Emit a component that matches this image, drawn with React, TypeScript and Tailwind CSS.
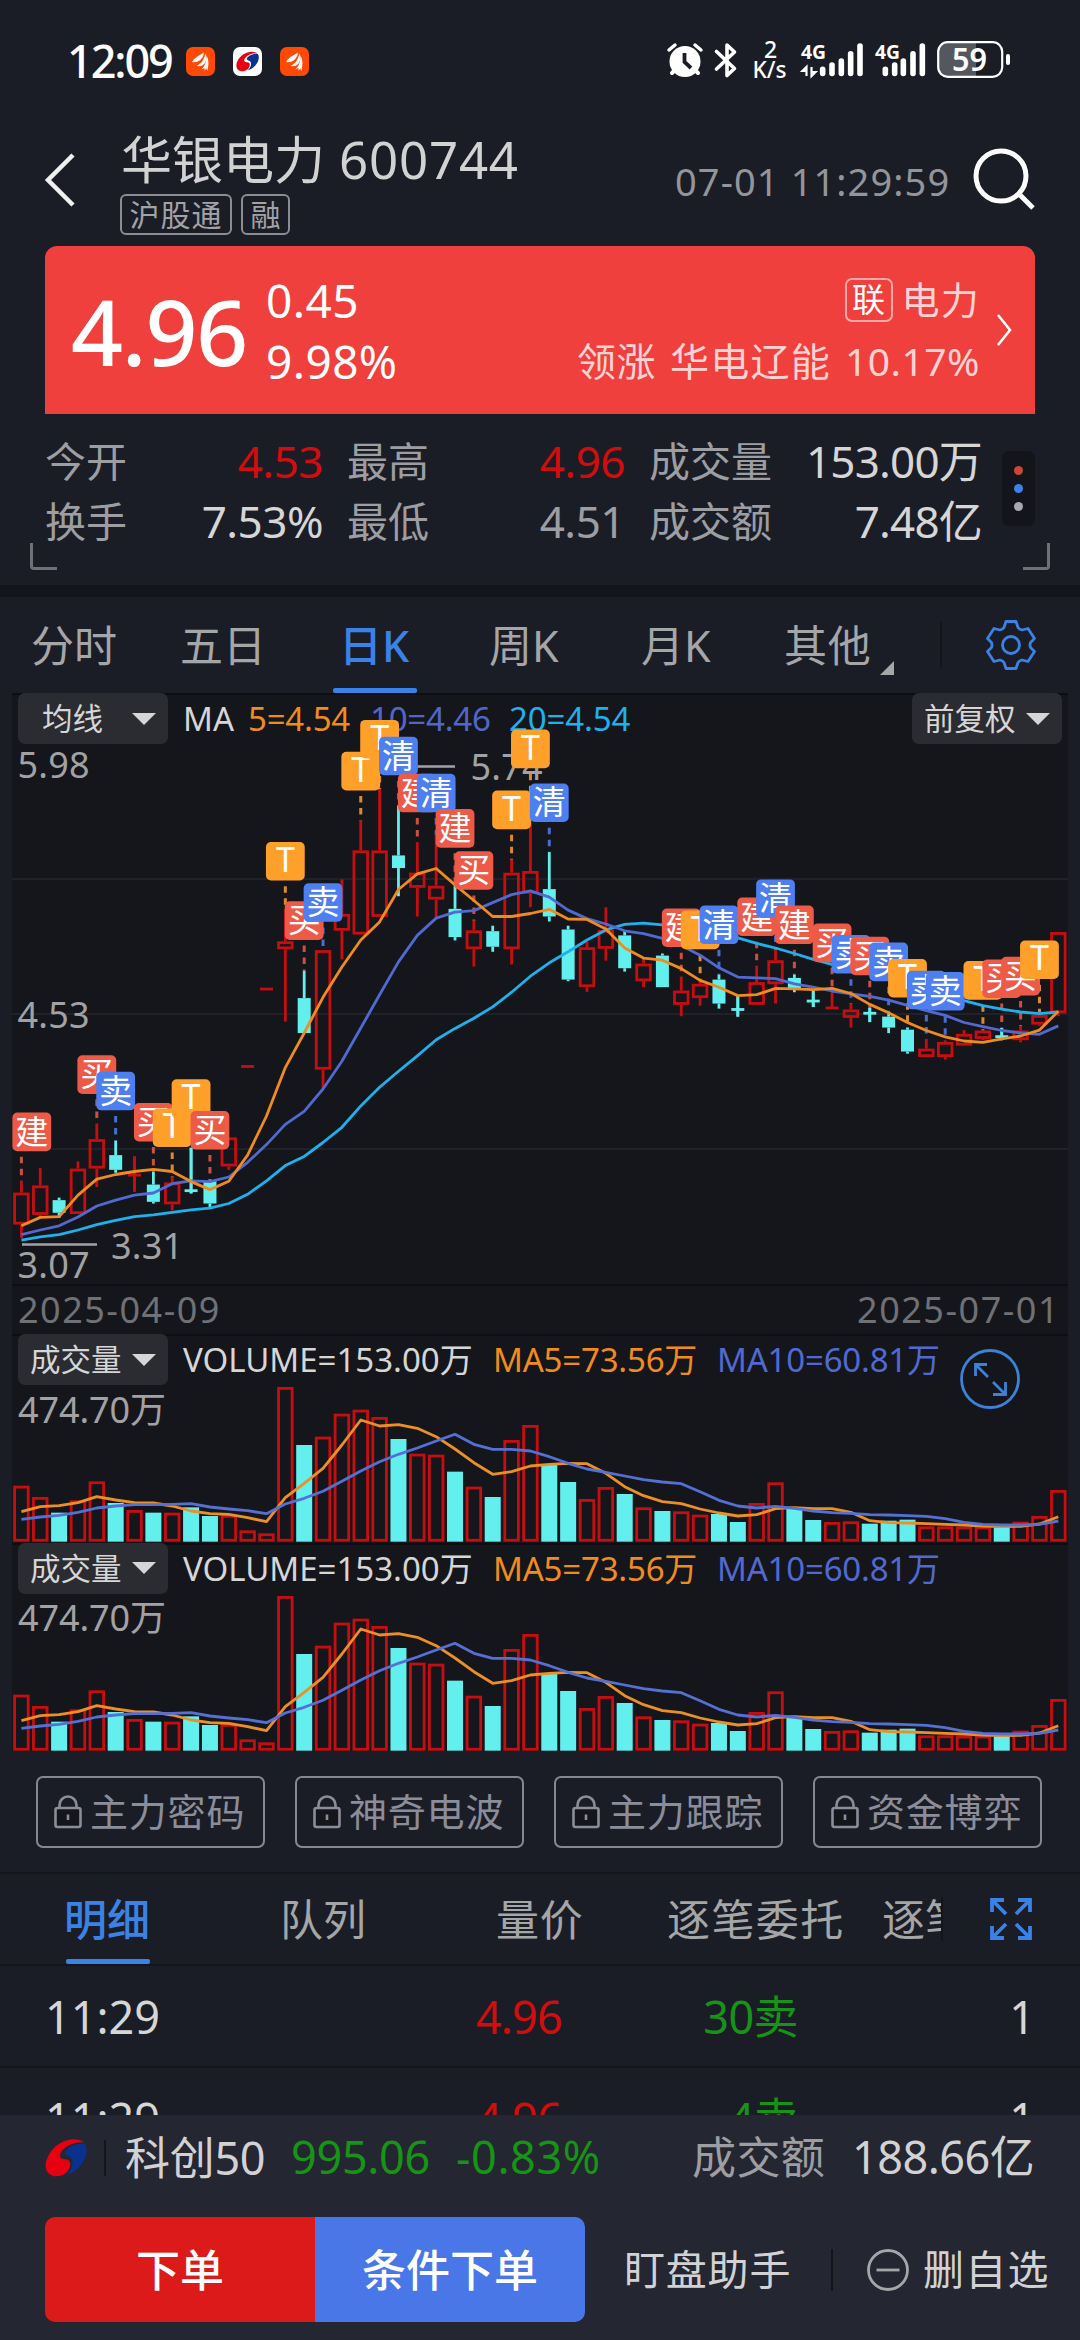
import React from "react";

type Tone = "r" | "c";
type Candle = [number, number, number, number, Tone];

const RED = "#c60e11";
const CYAN = "#63efee";
const STEP = 18.853;
const cx = (i: number) => 21.4 + STEP * i;
const py = (v: number) => v / 2.3758;
const vy = (v: number) => v / 3;

/* high, body top, body bottom, low */
const CANDLES: Candle[] = [
  [1168, 1194, 1270, 1302, "r"], [1136, 1177, 1247, 1252, "r"], [1206, 1212, 1242, 1254, "c"], [1120, 1137, 1245, 1245, "r"],
  [1030, 1067, 1137, 1181, "r"], [1071, 1105, 1140, 1147, "c"], [1108, 1150, 1155, 1192, "r"], [1145, 1175, 1216, 1220, "c"],
  [1158, 1170, 1222, 1236, "r"], [1088, 1187, 1192, 1196, "c"], [1163, 1167, 1220, 1230, "c"], [1063, 1063, 1132, 1140, "r"],
  [892, 892, 897, 897, "r"], [708, 708, 713, 713, "r"], [520, 597, 616, 788, "r"], [667, 732, 815, 815, "c"],
  [618, 618, 902, 946, "r"], [450, 532, 572, 640, "r"], [310, 381, 581, 581, "r"], [235, 381, 539, 539, "r"],
  [275, 393, 423, 490, "c"], [362, 434, 470, 538, "r"], [345, 465, 498, 540, "r"], [465, 520, 587, 595, "c"],
  [548, 571, 616, 657, "r"], [560, 573, 610, 622, "c"], [403, 434, 616, 652, "r"], [310, 430, 484, 516, "r"],
  [385, 473, 538, 550, "c"], [560, 569, 688, 692, "c"], [598, 611, 706, 717, "r"], [516, 570, 615, 643, "r"],
  [572, 583, 661, 669, "c"], [637, 650, 692, 706, "r"], [626, 631, 706, 706, "c"], [683, 714, 748, 775, "r"],
  [690, 698, 732, 750, "r"], [676, 688, 745, 757, "c"], [725, 757, 761, 776, "c"], [655, 694, 748, 748, "r"],
  [618, 642, 699, 745, "r"], [676, 684, 710, 718, "c"], [715, 737, 741, 753, "c"], [705, 753, 758, 758, "r"],
  [746, 759, 779, 802, "r"], [755, 766, 770, 789, "c"], [770, 776, 802, 815, "c"], [803, 807, 859, 864, "c"],
  [829, 852, 872, 872, "r"], [833, 836, 872, 878, "r"], [808, 817, 845, 845, "r"], [809, 809, 829, 832, "r"],
  [803, 821, 826, 832, "c"], [798, 809, 832, 837, "r"], [766, 772, 795, 798, "r"], [575, 575, 768, 775, "r"],
];

const MA5 = [1273, 1253, 1251, 1200, 1162, 1151, 1144, 1139, 1144, 1168, 1187, 1167, 1105, 1012, 897, 815, 730, 658, 594, 551, 474, 437, 424, 463, 500, 538, 538, 531, 521, 544, 545, 568, 613, 637, 642, 662, 690, 706, 726, 724, 709, 710, 712, 709, 721, 747, 767, 790, 809, 824, 834, 837, 829, 822, 808, 763];
const MA10 = [1294, 1283, 1273, 1252, 1226, 1212, 1200, 1195, 1173, 1166, 1168, 1157, 1122, 1080, 1032, 1001, 948, 882, 803, 724, 646, 583, 542, 528, 524, 505, 486, 477, 492, 523, 543, 556, 572, 579, 590, 607, 630, 660, 682, 684, 686, 698, 706, 715, 722, 728, 737, 749, 762, 773, 790, 800, 809, 815, 818, 798];
const MA20 = [1307, 1299, 1294, 1283, 1270, 1260, 1251, 1247, 1241, 1235, 1231, 1220, 1198, 1166, 1130, 1108, 1075, 1039, 988, 944, 906, 869, 831, 804, 780, 753, 718, 680, 648, 622, 594, 570, 557, 554, 558, 563, 570, 578, 589, 602, 613, 626, 640, 652, 660, 670, 682, 695, 708, 722, 738, 750, 758, 765, 769, 765];

type Mark = "建" | "买" | "卖" | "清" | "T";
const MARKS: [number, Mark, number][] = [
  [0, "建", 1004], [4, "买", 868], [5, "卖", 907], [7, "买", 981], [8, "T", 994], [9, "T", 925], [10, "买", 1000],
  [14, "T", 361], [15, "买", 502], [16, "卖", 459], [18, "T", 147], [19, "T", 71], [20, "清", 111], [21, "建", 199],
  [22, "清", 199], [23, "建", 283], [24, "买", 383], [26, "T", 239], [27, "T", 94], [28, "清", 222], [35, "建", 519],
  [36, "T", 524], [37, "清", 512], [39, "建", 493], [40, "清", 450], [41, "建", 512], [43, "买", 555], [44, "卖", 582],
  [45, "买", 586], [46, "卖", 600], [47, "T", 639], [48, "卖", 667], [49, "卖", 670], [51, "T", 644], [52, "买", 640],
  [53, "买", 634], [54, "T", 595],
];
const markColor = (m: Mark) => (m === "T" ? "#ffa02b" : m === "建" || m === "买" ? "#ee5a48" : "#4d7ff0");

const VOL = [497, 531, 578, 541, 484, 549, 570, 578, 578, 562, 588, 585, 631, 640, 201, 375, 350, 281, 269, 291, 357, 401, 404, 455, 500, 531, 360, 315, 433, 486, 537, 501, 522, 562, 573, 574, 584, 582, 606, 549, 487, 567, 600, 606, 604, 611, 602, 599, 619, 619, 620, 620, 622, 605, 588, 510];
const VMA5 = [575, 560, 557, 548, 530, 540, 548, 549, 558, 573, 581, 583, 593, 605, 533, 490, 445, 375, 300, 318, 314, 325, 350, 387, 428, 463, 455, 438, 433, 430, 431, 460, 500, 527, 545, 551, 567, 579, 588, 584, 566, 563, 566, 566, 577, 602, 608, 609, 611, 613, 615, 618, 620, 619, 612, 590];
const VMA10 = [598, 591, 586, 577, 564, 558, 554, 554, 553, 551, 561, 567, 572, 581, 552, 535, 514, 484, 453, 425, 403, 384, 363, 343, 373, 388, 388, 393, 410, 430, 447, 457, 468, 479, 486, 491, 515, 541, 558, 564, 559, 565, 573, 578, 580, 584, 585, 587, 589, 596, 607, 613, 615, 615, 613, 603];

const line = (vals: number[], y: (v: number) => number) =>
  vals.map((v, i) => `${cx(i).toFixed(1)},${y(v).toFixed(1)}`).join(" ");

function Swirl({ w, h, className = "" }: { w: number; h: number; className?: string }) {
  return (
    <svg width={w} height={h} viewBox="0 0 126 120" preserveAspectRatio="none" className={className}>
      <path d="M118 13C88-8 28 8 6 62c-11 30 2 53 27 53 23 0 38-13 42-30 3-15-4-21-16-21-14 0-19-11-9-24C64 21 92 10 118 13z" fill="#e60012" />
      <path d="M119 17C96 13 66 28 60 43c-3 11 9 9 17 16 13 14 3 34-13 53 38-14 66-50 60-84-1-6-3-10-5-11z" fill="#0b318f" />
    </svg>
  );
}

function FeatherApp() {
  return (
    <svg width="29" height="29" viewBox="0 0 29 29">
      <rect width="29" height="29" rx="7" fill="#ff4a05" />
      <g fill="#fff">
        <path d="M6 15c2-3.500 5-5.500 12-9.500-.5 4-2.500 6.500-4.500 8-2 1.500-5 2-7.500 1.500z" />
        <path d="M10.500 18.800c5-2 7.500-6 9-12.500 1.700 4 1 8-1.200 10.500s-5.300 3-7.800 2z" />
        <path d="M15.500 22.500c4-4.500 5-8.500 5-13.500 2.300 3.500 2.500 8 .8 15l-1.200-3-1.200 2.500-.7-2.500z" />
      </g>
    </svg>
  );
}

function StatusIcons() {
  const tops = [110, 97, 85, 63, 40];
  const bars = (xs: number[]) =>
    xs.map((x, i) => (
      <line key={x} x1={x / 3} x2={x / 3} y1={tops[i] / 3 + 2.7} y2={43.5} stroke="#fff" strokeWidth="5.6" strokeLinecap="round" />
    ));
  return (
    <svg width="380" height="70" viewBox="0 0 380 70" fontFamily='"Noto Sans", sans-serif' fill="#fff">
      <circle cx="34" cy="31.500" r="15.500" />
      <path d="M21 43l4-4M47 43l-4-4" stroke="#fff" strokeWidth="4" strokeLinecap="round" />
      <path d="M18 20l6-5M50 20l-6-5" stroke="#fff" strokeWidth="3.5" strokeLinecap="round" />
      <path d="M33.500 23v9l6.500 6" stroke="#1b1d26" strokeWidth="3.8" fill="none" />
      <path d="M65.500 21.500l18 17-7.500 7V15l7.500 7-18 17" stroke="#fff" strokeWidth="3.6" fill="none" strokeLinejoin="round" strokeLinecap="round" />
      <text x="113" y="27.500" fontSize="23" fontWeight="500">2</text>
      <text x="101.500" y="48" fontSize="23" fontWeight="500" textLength="34" lengthAdjust="spacingAndGlyphs">K/s</text>
      <text x="150" y="28.500" fontSize="20" fontWeight="700" textLength="25" lengthAdjust="spacingAndGlyphs">4G</text>
      <text x="224" y="28.500" fontSize="20" fontWeight="700" textLength="25" lengthAdjust="spacingAndGlyphs">4G</text>
      <path d="M155.500 46V37l-4 4h3M160.500 37v9l4-4h-3" stroke="#fff" strokeWidth="2.2" fill="none" />
      {bars([515, 543, 571, 599, 627])}
      {bars([703, 731, 757, 786, 814])}
      <path d="M297 12.500h28v34h-28a9 9 0 0 1-9-9v-16a9 9 0 0 1 9-9z" fill="#55575f" />
      <rect x="287.200" y="12.200" width="64" height="34.600" rx="9.500" fill="none" stroke="#fff" strokeWidth="2.2" />
      <line x1="357" x2="357" y1="26" y2="33" stroke="#fff" strokeWidth="4" strokeLinecap="round" />
      <text x="301" y="41" fontSize="33" fontWeight="600" textLength="35" lengthAdjust="spacingAndGlyphs">59</text>
    </svg>
  );
}

function StatusBar() {
  return (
    <div className="flex h-[122px] items-center pl-[67px]">
      <span className="mb-[2px] w-[119px] text-[45px] font-medium tracking-[-2.1px] text-white">12:09</span>
      <FeatherApp />
      <div className="mx-[18px] flex h-[29px] w-[29px] items-center justify-center rounded-[7px] bg-white">
        <Swirl w={23} h={21} />
      </div>
      <FeatherApp />
      <div className="ml-[342px] mt-[8px]"><StatusIcons /></div>
    </div>
  );
}

function Header() {
  return (
    <div className="flex h-[124px] pl-[43px]">
      <svg width="34" height="62" viewBox="0 0 34 62" className="mt-[27px]">
        <path d="M30 6L5 31l25 25" fill="none" stroke="#f0f0f0" strokeWidth="4.5" />
      </svg>
      <div className="ml-[43px] w-[555px] pt-[7px]">
        <div className="flex h-[65px] items-start pt-[5px] text-[51px] text-[#d2d2d2]">
          <span className="ml-[1px] w-[218px]">华银电力</span>
          <span className="tracking-[0.8px]">600744</span>
        </div>
        <div className="flex gap-[9px]">
          <span className="flex h-[41px] w-[112px] items-center justify-center rounded-[6px] border-2 border-[#8b8d92] text-[30px] tracking-[1px] text-[#a2a3a6]">沪股通</span>
          <span className="flex h-[41px] w-[49px] items-center justify-center rounded-[6px] border-2 border-[#8b8d92] text-[30px] text-[#a2a3a6]">融</span>
        </div>
      </div>
      <span className="mt-[30px] w-[297px] text-[38px] leading-[58px] tracking-[1.1px] text-[#93959a]">07-01 11:29:59</span>
      <svg width="66" height="66" viewBox="0 0 66 66" className="mt-[25px]">
        <circle cx="29" cy="29" r="25" fill="none" stroke="#fff" strokeWidth="5" />
        <path d="M47 47l14 14" stroke="#fff" strokeWidth="5" />
      </svg>
    </div>
  );
}

function PriceCard() {
  return (
    <div className="mx-[45px] flex h-[168px] rounded-t-[12px] bg-[#ef403d] text-white">
      <span className="ml-[26px] w-[195px] text-[91px] font-medium leading-[170px] tracking-[-1.2px]">4.96</span>
      <div className="flex w-[240px] flex-col pt-[24px] text-[46px] leading-[61px]">
        <span className="tracking-[0.4px]">0.45</span>
        <span className="tracking-[0.4px]">9.98%</span>
      </div>
      <div className="ml-auto flex flex-col items-end pt-[23px] text-[39px] leading-[61px] text-[#fcd3d2]">
        <div className="flex items-center gap-[9px]">
          <span className="flex h-[44px] w-[48px] items-center justify-center rounded-[7px] border-2 border-[#f9a9a7] text-[33px] text-white">联</span>
          <span className="text-[38px] tracking-[1.2px]">电力</span>
        </div>
        <div className="flex">
          <span className="mr-[14px] tracking-[0.5px]">领涨</span>
          <span className="mr-[14px] tracking-[1.2px]">华电辽能</span>
          <span className="tracking-[0.5px]">10.17%</span>
        </div>
      </div>
      <svg width="20" height="36" viewBox="0 0 20 36" className="ml-[14px] mr-[21px] mt-[66px]">
        <path d="M4 3l12 15L4 33" fill="none" stroke="#fff" strokeWidth="2.6" />
      </svg>
    </div>
  );
}

function Stats() {
  const rows = [
    ["今开", "4.53", "text-[#d20d0d]", "最高", "4.96", "text-[#d20d0d]", "成交量", "153.00万"],
    ["换手", "7.53%", "text-[#d6d6d6]", "最低", "4.51", "text-[#9d9ea2]", "成交额", "7.48亿"],
  ];
  return (
    <div className="relative flex h-[171px] pl-[45px] pt-[17px]">
      <div className="w-[937px]">
        {rows.map((r) => (
          <div key={r[0]} className="flex h-[60px] items-center text-[44px] text-[#d6d6d6]">
            <span className="w-[120px] text-[41px] text-[#9d9ea2]">{r[0]}</span>
            <span className={`w-[158px] text-right tracking-[-0.5px] ${r[2]}`}>{r[1]}</span>
            <span className="ml-[24px] w-[120px] text-[41px] text-[#9d9ea2]">{r[3]}</span>
            <span className={`w-[158px] text-right tracking-[-0.5px] ${r[5]}`}>{r[4]}</span>
            <span className="ml-[24px] w-[130px] text-[41px] text-[#9d9ea2]">{r[6]}</span>
            <span className="flex-1 text-right tracking-[-0.8px]">{r[7]}</span>
          </div>
        ))}
      </div>
      <div className="ml-[20px] mt-[20px] flex h-[75px] w-[33px] flex-col items-center justify-center gap-[9px] rounded-[7px] bg-[#14151a]">
        <i className="h-[9px] w-[9px] rounded-full bg-[#c9483a]" />
        <i className="h-[9px] w-[9px] rounded-full bg-[#3b82ea]" />
        <i className="h-[9px] w-[9px] rounded-full bg-[#a9a9ab]" />
      </div>
      <i className="absolute bottom-[15px] left-[30px] h-[27px] w-[27px] rounded-bl-[4px] border-b-[3px] border-l-[3px] border-[#6f7176]" />
      <i className="absolute bottom-[15px] right-[30px] h-[27px] w-[27px] rounded-br-[4px] border-b-[3px] border-r-[3px] border-[#6f7176]" />
    </div>
  );
}

function PeriodTabs() {
  return (
    <div className="relative flex h-[96px] items-center text-[43px] text-[#a5a6a8]">
      <span className="ml-[31px] w-[149px]">分时</span>
      <span className="w-[159px]">五日</span>
      <span className="w-[150px] font-medium text-[#3b82e6]">日K</span>
      <span className="w-[152px]">周K</span>
      <span className="w-[143px]">月K</span>
      <span className="w-[96px] tracking-[0.8px]">其他</span>
      <svg width="15" height="15" className="mt-[46px]"><path d="M14 0v14H0z" fill="#a5a6a8" /></svg>
      <i className="ml-[45px] h-[46px] w-[2px] bg-[#14151a]" />
      <svg width="54" height="54" viewBox="-27 -27 54 54" className="ml-[42px]">
        <g fill="none" stroke="#3b82e6" strokeWidth="2.8" strokeLinejoin="round">
          <path d="M-5-23.500H5L7-17.500Q8.500-15.500 11-15L17-16.500L23.500-6.500L19.500-2.500Q18.500 0 19.500 2.500L23.500 6.500L17 16.500L11 15Q8.500 15.500 7 17.500L5 23.500H-5L-7 17.500Q-8.500 15.500-11 15L-17 16.500L-23.500 6.500L-19.500 2.500Q-18.500 0-19.500-2.500L-23.500-6.500L-17-16.500L-11-15Q-8.500-15.500-7-17.500Z" />
          <circle r="8.500" />
        </g>
      </svg>
      <i className="absolute bottom-0 left-[333px] h-[5px] w-[84px] rounded-[2px] bg-[#3b82e6]" />
    </div>
  );
}

function Picker({ label, pad }: { label: string; pad: string }) {
  return (
    <span className={`flex h-[51px] w-[150px] items-center justify-between rounded-[7px] bg-[#2b2c31] pr-[12px] text-[30.5px] text-[#d6d6d6] ${pad}`}>
      {label}
      <svg width="24" height="12"><path d="M0 0h24L12 12z" fill="#d6d6d6" /></svg>
    </span>
  );
}

function KChart() {
  return (
    <div className="relative h-[591px] border-t-2 border-[#0d0e12]">
      <div className="-mt-[2px] flex h-[51px] items-center pl-[6px] pr-[6px] text-[33px]">
        <Picker label="均线" pad="pl-[24px]" />
        <span className="ml-[15px] w-[65px] text-[#d6d6d6]">MA</span>
        <span className="w-[122px] tracking-[-0.2px] text-[#f08c1e]">5=4.54</span>
        <span className="w-[139px] tracking-[-0.2px] text-[#5167c8]">10=4.46</span>
        <span className="tracking-[-0.1px] text-[#1fb0ee]">20=4.54</span>
        <div className="ml-auto"><Picker label="前复权" pad="pl-[12px]" /></div>
      </div>
      <svg className="absolute left-0 top-[-2px] overflow-visible" width="1056" height="591" viewBox="12 3 1056 591" fontFamily='"Noto Sans", "Noto Sans CJK SC", sans-serif'>
        <g stroke="#212227" strokeWidth="2">
          <path d="M12 189H1068M12 324H1068M12 459H1068" />
        </g>
        <g fill="#a2a2a4" fontSize="36">
          <text x="17.500" y="88" textLength="72">5.98</text>
          <text x="17.500" y="337.500" textLength="72">4.53</text>
          <text x="17.500" y="587.500" textLength="72">3.07</text>
          <text x="111" y="569" textLength="72">3.31</text>
          <text x="470.500" y="90" textLength="72">5.74</text>
        </g>
        <path d="M22 554.500H97M398 76.500H455" stroke="#a2a2a4" strokeWidth="2.5" />
        {MARKS.map(([i, m, top]) => (
          <line key={i} x1={cx(i)} x2={cx(i)} y1={py(top + 105)} y2={py(CANDLES[i][0])} stroke={markColor(m)} strokeWidth="3" strokeDasharray="6.5 5.5" opacity={py(top + 105) < py(CANDLES[i][0]) ? 0.85 : 0} />
        ))}
        {CANDLES.map(([h, t, b, l, tone], i) => {
          const x = cx(i);
          const thin = b - t < 6;
          const col = tone === "r" ? RED : CYAN;
          return (
            <g key={i} stroke={col} strokeWidth="2.8" fill="none">
              {h < t && <path d={`M${x} ${py(h)}V${py(t)}`} />}
              {l > b && <path d={`M${x} ${py(b)}V${py(l)}`} />}
              {h < t && l > b && thin && <path d={`M${x} ${py(h)}V${py(l)}`} />}
              {thin ? (
                <path d={`M${x - 6.5} ${py((t + b) / 2)}h13`} />
              ) : tone === "r" ? (
                <rect x={x - 6.8} y={py(t) + 1.4} width="13.6" height={py(b - t) - 2.8} />
              ) : (
                <rect x={x - 6.5} y={py(t)} width="13" height={py(b - t)} fill={col} stroke="none" />
              )}
            </g>
          );
        })}
        <g fill="none" strokeWidth="2.8" strokeLinejoin="round">
          <polyline points={line(MA20, py)} stroke="#1fb0ee" />
          <polyline points={line(MA10, py)} stroke="#5169d0" />
          <polyline points={line(MA5, py)} stroke="#f08c1e" />
        </g>
        {MARKS.map(([i, m, top]) => {
          const x = Math.max(cx(i), 31.8);
          return (
            <g key={i}>
              <rect x={x - 19.4} y={py(top)} width="38.8" height="38.6" rx="5" fill={markColor(m)} />
              <text x={x} y={py(top) + (m === "T" ? 30 : 31)} fontSize={m === "T" ? 34 : 33} textAnchor="middle" fill="#fff">{m}</text>
            </g>
          );
        })}
      </svg>
    </div>
  );
}

function VolumePanel({ children, shift = 0 }: { children?: React.ReactNode; shift?: number }) {
  return (
    <div className="relative h-[208.5px] border-t-2 border-[#0d0e12]">
      <div className="-mt-[2px] flex h-[51px] items-center pl-[6px] text-[33px]">
        <Picker label="成交量" pad="pl-[12px]" />
        <span className="ml-[15px] w-[310px] tracking-[0px] text-[#d6d6d6]">VOLUME=153.00万</span>
        <span className="w-[224px] tracking-[-0.2px] text-[#f08c1e]">MA5=73.56万</span>
        <span className="tracking-[-0.2px] text-[#5169d0]">MA10=60.81万</span>
      </div>
      <svg className="absolute left-0 top-[-2px]" width="1056" height="209" viewBox="12 14 1056 209" fontFamily='"Noto Sans", "Noto Sans CJK SC", sans-serif'>
        <text x="18" y={103 - shift} fontSize="36" textLength="148" fill="#a2a2a4">474.70万</text>
        {VOL.map((v, i) =>
          CANDLES[i][4] === "r" ? (
            <rect key={i} x={cx(i) - 6.8} y={vy(v) + 1.4} width="13.6" height={vy(665 - v) - 2.8} fill="none" stroke={RED} strokeWidth="2.8" />
          ) : (
            <rect key={i} x={cx(i) - 8} y={vy(v)} width="16" height={vy(665 - v)} fill={CYAN} />
          )
        )}
        <g fill="none" strokeWidth="2.8" strokeLinejoin="round">
          <polyline points={line(VMA5, vy)} stroke="#ec9026" />
          <polyline points={line(VMA10, vy)} stroke="#5570d4" />
        </g>
      </svg>
      {children}
    </div>
  );
}

function Locked() {
  return (
    <div className="flex h-[123px] shrink-0 gap-[30px] border-b-2 border-[#14151b] pl-[36px] pt-[25px]">
      {["主力密码", "神奇电波", "主力跟踪", "资金博弈"].map((t) => (
        <div key={t} className="flex h-[72px] w-[229px] items-center rounded-[7px] border-2 border-[#858794] text-[38px] text-[#8b8d9a]">
          <svg width="28" height="34" viewBox="0 0 28 34" className="ml-[16px] mr-[8px]" fill="none" stroke="#8b8d9a" strokeWidth="2.6">
            <path d="M5.500 13V10a8.500 8.500 0 0 1 17 0v3" />
            <rect x="1.500" y="13" width="25" height="19" rx="2" fill="#15161b" />
            <path d="M14 19.500v5.500" />
          </svg>
          <span className="mb-[2px] tracking-[0.8px]">{t}</span>
        </div>
      ))}
    </div>
  );
}

function DetailTabs() {
  return (
    <div className="relative flex h-[92px] shrink-0 items-center border-b-2 border-[#14151b] text-[43px] text-[#a5a6a8]">
      <span className="ml-[64px] w-[216px] font-medium text-[#3b82e6]">明细</span>
      <span className="w-[216px]">队列</span>
      <span className="w-[171px] tracking-[0.8px]">量价</span>
      <span className="w-[215px] tracking-[1.4px]">逐笔委托</span>
      <span className="w-[59px] overflow-hidden whitespace-nowrap">逐笔</span>
      <i className="h-[44px] w-[2px] bg-[#14151a]" />
      <svg width="44" height="44" viewBox="0 0 44 44" className="ml-[46px]" fill="none" stroke="#3b82e6" strokeWidth="3.8">
        <path d="M3 15V3h12M3 3l14 14M29 3h12v12M41 3L27 17M41 29v12H29M41 41L27 27M15 41H3V29M3 41l14-14" />
      </svg>
      <i className="absolute bottom-[0px] left-[66px] h-[5px] w-[84px] rounded-[2px] bg-[#3b82e6]" />
    </div>
  );
}

function Trade({ side }: { side: string }) {
  return (
    <div className="flex h-[102px] shrink-0 items-center border-b-2 border-[#14151b] text-[45px]">
      <span className="ml-[45px] w-[300px] text-[#d6d6d6]">11:29</span>
      <span className="w-[217px] text-right tracking-[-0.8px] text-[#d20d0d]">4.96</span>
      <span className="w-[236px] text-right tracking-[-0.6px] text-[#179317]">{side}</span>
      <span className="w-[237px] text-right text-[#d6d6d6]">1</span>
    </div>
  );
}

function Footer() {
  return (
    <div className="h-[225px] shrink-0 bg-[#242631]">
      <div className="flex h-[83px] items-center pl-[45px] text-[45px] text-[#d2d2d4]">
        <Swirl w={42} h={40} className="mt-[3px]" />
        <i className="ml-[17px] mt-[2px] h-[36px] w-[2px] bg-[#14151a]" />
        <span className="ml-[19px] w-[166px] pt-[1px] tracking-[-0.3px]">科创50</span>
        <span className="w-[165px] tracking-[-0.3px] text-[#179317]">995.06</span>
        <span className="w-[236px] tracking-[0.6px] text-[#179317]">-0.83%</span>
        <span className="w-[160px] text-[44px] tracking-[0.4px] text-[#9d9ea3]">成交额</span>
        <span className="tracking-[-0.5px]">188.66亿</span>
      </div>
      <div className="mt-[19px] flex h-[105px] items-center pl-[45px] text-[41px] text-[#d2d2d4]">
        <div className="flex h-full w-[540px] overflow-hidden rounded-[10px] text-[44px] font-medium text-white">
          <span className="flex w-1/2 items-center justify-center bg-[#dc1a1a]">下单</span>
          <span className="flex w-1/2 items-center justify-center bg-[#4a77e8]">条件下单</span>
        </div>
        <span className="ml-[39px] w-[207px] tracking-[0.8px]">盯盘助手</span>
        <i className="h-[42px] w-[2px] bg-[#14151a]" />
        <svg width="42" height="42" viewBox="0 0 42 42" className="ml-[34px]" fill="none" stroke="#a5a6aa" strokeWidth="2.8">
          <circle cx="21" cy="21" r="19.500" />
          <path d="M9.500 21h23" />
        </svg>
        <span className="ml-[14px] tracking-[1.2px]">删自选</span>
      </div>
    </div>
  );
}

export default function App() {
  return (
    <div className='flex h-[2340px] w-[1080px] flex-col overflow-hidden whitespace-nowrap bg-[#1b1d26] font-["Noto_Sans","Noto_Sans_CJK_SC",sans-serif] leading-none'>
      <StatusBar />
      <Header />
      <PriceCard />
      <Stats />
      <div className="h-[12px] bg-[#14151a]" />
      <PeriodTabs />
      <div className="mx-[12px] h-[1058px] bg-[#15161b]">
        <KChart />
        <div className="flex h-[50px] items-center justify-between border-t-2 border-[#0d0e12] pl-[6px] pr-[8px] text-[36px] tracking-[1.5px] text-[#6f7175]">
          <span>2025-04-09</span>
          <span>2025-07-01</span>
        </div>
        <VolumePanel>
          <svg className="absolute left-[948px] top-[13px]" width="60" height="60" viewBox="0 0 60 60" fill="none" stroke="#3b82d8" strokeWidth="2.8">
            <circle cx="30" cy="30" r="28.500" />
            <path d="M15.500 27V15.500H27M15.500 15.500L28 28M45.500 33v12.500H33M45.500 45.500L33 33" />
          </svg>
        </VolumePanel>
        <VolumePanel shift={1} />
      </div>
      <Locked />
      <DetailTabs />
      <div className="flex h-[149px] shrink-0 flex-col overflow-hidden">
        <Trade side="30卖" />
        <Trade side="4卖" />
      </div>
      <Footer />
    </div>
  );
}
